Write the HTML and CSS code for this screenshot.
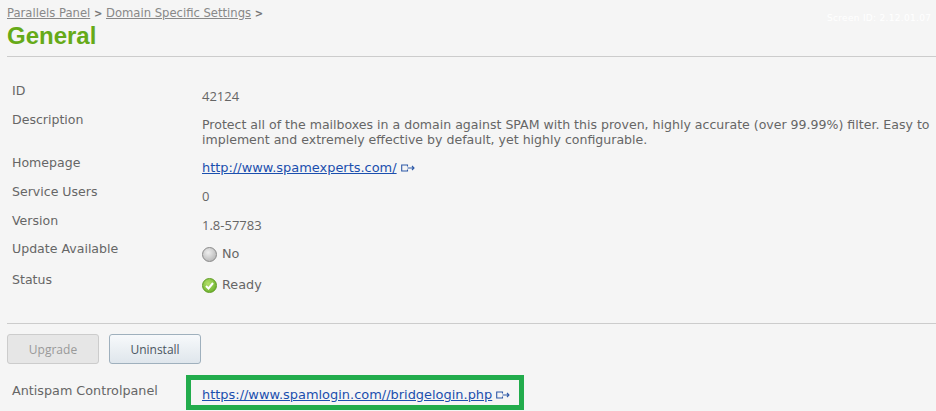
FILE: index.html
```html
<!DOCTYPE html>
<html lang="en">
<head>
  <meta charset="UTF-8" />
  <title>General</title>
  <link rel="stylesheet" href="styles.css">
</head>
<body>
  <header class="page-head">
    <div class="crumbs">
      <a href="#">Parallels Panel</a> <b>&gt;</b> <a href="#">Domain Specific Settings</a> <b>&gt;</b>
    </div>
    <div class="screen-id">Screen ID: 2.12.01.07</div>
    <h1>General</h1>
  </header>

  <section class="info">
    <div class="row r-first">
      <div class="label">ID</div>
      <div class="value num">42124</div>
    </div>
    <div class="row r-desc">
      <div class="label">Description</div>
      <div class="value">Protect all of the mailboxes in a domain against SPAM with this proven, highly accurate (over 99.99%) filter. Easy to<br>implement and extremely effective by default, yet highly configurable.</div>
    </div>
    <div class="row">
      <div class="label">Homepage</div>
      <div class="value">
        <a href="#">http://www.spamexperts.com/</a>
        <svg class="ext" width="14" height="8" viewBox="0 0 14 8"><path d="M6.500 2.500V1H.7v6h5.800V5.500M6.500 4H13M11 2l2 2-2 2" fill="none" stroke="#2f5aa8" stroke-width="1.100"/></svg>
      </div>
    </div>
    <div class="row">
      <div class="label">Service Users</div>
      <div class="value num">0</div>
    </div>
    <div class="row r-short">
      <div class="label">Version</div>
      <div class="value num">1.8-57783</div>
    </div>
    <div class="row r-tall">
      <div class="label">Update Available</div>
      <div class="value with-icon">
        <span class="dot dot-off"></span>No
      </div>
    </div>
    <div class="row">
      <div class="label">Status</div>
      <div class="value with-icon">
        <span class="dot dot-ok">
          <svg width="9" height="8" viewBox="0 0 9 8"><path d="M1 4l2.500 2.500L8 1" fill="none" stroke="#fff" stroke-width="2"/></svg>
        </span>Ready
      </div>
    </div>
  </section>

  <div class="actions">
    <button class="btn btn-off">Upgrade</button>
    <button class="btn">Uninstall</button>
  </div>

  <div class="panel-row">
    <div class="label">Antispam Controlpanel</div>
    <div class="highlight">
      <a href="#">https://www.spamlogin.com//bridgelogin.php</a>
      <svg class="ext" width="14" height="8" viewBox="0 0 14 8"><path d="M6.500 2.500V1H.7v6h5.800V5.500M6.500 4H13M11 2l2 2-2 2" fill="none" stroke="#2f5aa8" stroke-width="1.100"/></svg>
    </div>
  </div>
</body>
</html>
```

FILE: styles.css
```css
html, body {
  height: 411px;
  overflow: hidden;
}

body {
  margin: 0;
  padding: 0 0 0 7px;
  font-family: "DejaVu Sans", Verdana, sans-serif;
  font-size: 12.55px;
  color: #666;
  background-color: #f5f5f5;
}

/* header */
.page-head {
  position: relative;
  height: 56px;
  border-bottom: 1px solid #ccc;
}

.crumbs {
  padding-top: 6px;
  font-size: 11.6px;
  line-height: 14px;
  color: #888;
}

.crumbs a {
  color: #888;
  font-size: 11.6px;
}

.crumbs b {
  font-size: 10px;
  color: #777;
}

.screen-id {
  position: absolute;
  top: 12px;
  left: 820px;
  font-size: 9px;
  line-height: 12px;
  letter-spacing: 0.3px;
  color: #fff;
  white-space: nowrap;
}

h1 {
  margin: 0;
  font-family: "Liberation Sans", Arial, sans-serif;
  font-size: 24px;
  line-height: 30px;
  font-weight: bold;
  color: #66aa18;
}

/* rows */
.info {
  height: 267px;
  padding-top: 20px;
  box-sizing: border-box;
  border-bottom: 1px solid #ccc;
}

.row {
  display: flex;
  height: 29px;
}

.r-desc {
  height: 43px;
}

.r-short {
  height: 28px;
}

.r-tall {
  height: 31px;
}

.label {
  width: 195px;
  padding-left: 5px;
  box-sizing: border-box;
  line-height: 28px;
  flex-shrink: 0;
}

.value {
  padding-top: 11px;
  line-height: 15px;
  white-space: nowrap;
}

.r-first .value {
  padding-top: 12px;
}

.num {
  font-family: "Open Sans", sans-serif;
  font-size: 13px;
}

a {
  color: #1b4fae;
  font-size: 12.95px;
}

.ext {
  margin-left: 0;
}

.with-icon {
  display: flex;
  align-items: flex-start;
  gap: 5px;
  font-size: 12.8px;
}

.dot {
  display: flex;
  align-items: center;
  justify-content: center;
  width: 15px;
  height: 15px;
  border-radius: 50%;
  box-sizing: border-box;
  margin-top: 1px;
}

.dot-off {
  border: 1px solid #888;
  background: radial-gradient(circle at 40% 35%, #eee, #aaa);
}

.dot-ok {
  border: 1px solid #5c9a1e;
  background: radial-gradient(circle at 40% 35%, #b5e06a, #5ca81e);
}

/* buttons */
.actions {
  display: flex;
  gap: 10px;
  padding-top: 10px;
}

.btn {
  width: 92px;
  height: 30px;
  font-family: "Open Sans", sans-serif;
  font-size: 12px;
  color: #4a5560;
  border: 1px solid #9fb0bd;
  border-radius: 3px;
  background: linear-gradient(#f7f9fb, #dfe6ec);
}

.btn-off {
  color: #999;
  border-color: #ccc;
  background: #e6e6e6;
}

/* bottom row */
.panel-row {
  display: flex;
  align-items: flex-start;
  margin-top: 11px;
}

.panel-row .label {
  width: 179px;
  font-size: 12.75px;
  line-height: 31px;
}

.highlight {
  width: 338px;
  height: 35px;
  box-sizing: border-box;
  border: 5px solid #22ac4c;
  padding: 7px 0 0 11px;
  line-height: 16px;
  white-space: nowrap;
}
```
